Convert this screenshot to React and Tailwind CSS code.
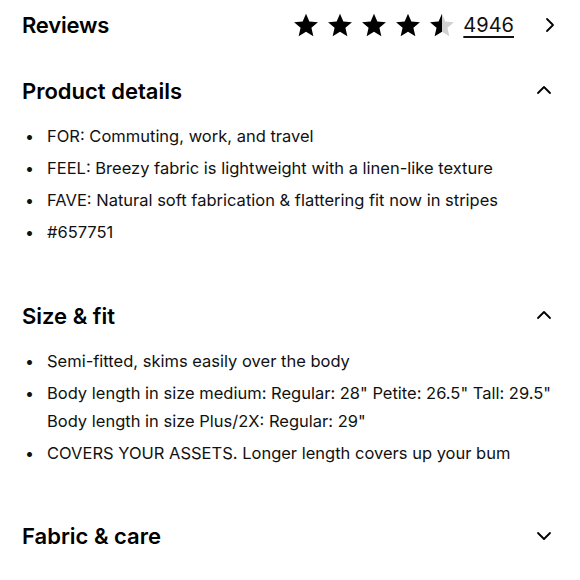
import React from 'react';

const FONT = { fontFamily: 'Inter, "Noto Sans", "Liberation Sans", sans-serif' };

function Star({ fill = 'full' }) {
  const id = 'half-star';
  const d = 'M12 1.5l3.09 7.26 7.91.68-6 5.2 1.8 7.71L12 18.27 5.2 22.35 7 14.64l-6-5.2 7.91-.68z';
  if (fill === 'half') {
    return (
      <svg width="26" height="26" viewBox="0 0 24 24">
        <defs>
          <clipPath id={id}>
            <rect x="0" y="0" width="12" height="24" />
          </clipPath>
        </defs>
        <path d={d} fill="#d1d1d1" />
        <path d={d} fill="#000" clipPath={`url(#${id})`} />
      </svg>
    );
  }
  return (
    <svg width="26" height="26" viewBox="0 0 24 24">
      <path d={d} fill="#000" />
    </svg>
  );
}

function Chevron({ dir = 'up' }) {
  const paths = {
    up: 'M2 10l6-6 6 6',
    down: 'M2 5l6 6 6-6',
    right: 'M5 2l6 6-6 6',
  };
  return (
    <svg width="16" height="16" viewBox="0 0 16 16" fill="none" stroke="#000" strokeWidth="1.8" strokeLinecap="round" strokeLinejoin="round">
      <path d={paths[dir]} />
    </svg>
  );
}

function SectionHeader({ title, open }) {
  return (
    <div className="flex h-[50px] items-center justify-between pr-[28px]">
      <h2 className="text-[22px] font-semibold text-black">{title}</h2>
      <Chevron dir={open ? 'up' : 'down'} />
    </div>
  );
}

function Bullets({ items }) {
  return (
    <ul className="mt-[6px] flex flex-col gap-[4px]">
      {items.map((item, i) => (
        <li key={i} className="flex text-[16.5px] leading-[28px] text-[#111]">
          <span className="w-[25px] shrink-0 pl-[3px] text-[16px]">•</span>
          <span>
            {Array.isArray(item)
              ? item.map((line, j) => <span key={j} className="block">{line}</span>)
              : item}
          </span>
        </li>
      ))}
    </ul>
  );
}

export default function App() {
  return (
    <div className="h-[580px] w-[580px] overflow-hidden bg-white pl-[22px]" style={FONT}>
      {/* Reviews row */}
      <div className="flex h-[50px] items-center justify-between pr-[22px]">
        <h2 className="text-[22px] font-semibold tracking-[-0.2px] text-black">Reviews</h2>
        <div className="flex items-center">
          <div className="flex items-center gap-[8px]">
            <Star />
            <Star />
            <Star />
            <Star />
            <Star fill="half" />
          </div>
          <span className="ml-[8px] text-[20px] text-[#111] underline underline-offset-[4px] decoration-[1.5px]">4946</span>
          <span className="ml-[28px]"><Chevron dir="right" /></span>
        </div>
      </div>

      <div className="mt-[16px]">
        <SectionHeader title="Product details" open />
        <Bullets
          items={[
            'FOR: Commuting, work, and travel',
            'FEEL: Breezy fabric is lightweight with a linen-like texture',
            'FAVE: Natural soft fabrication & flattering fit now in stripes',
            '#657751',
          ]}
        />
      </div>

      <div className="mt-[45px]">
        <SectionHeader title="Size & fit" open />
        <Bullets
          items={[
            'Semi-fitted, skims easily over the body',
            ['Body length in size medium: Regular: 28" Petite: 26.5" Tall: 29.5"', 'Body length in size Plus/2X: Regular: 29"'],
            'COVERS YOUR ASSETS. Longer length covers up your bum',
          ]}
        />
      </div>

      <div className="mt-[44px]">
        <SectionHeader title="Fabric & care" />
      </div>
    </div>
  );
}
